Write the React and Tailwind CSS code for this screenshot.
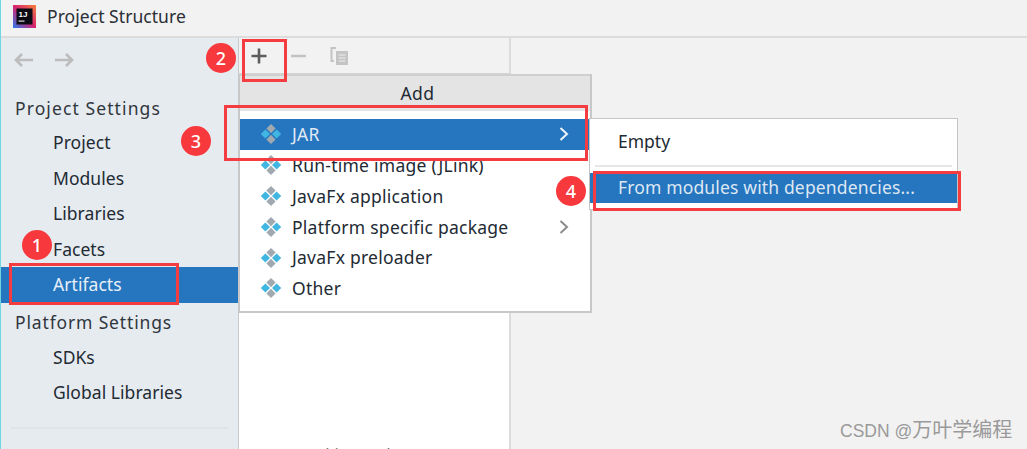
import React from "react";

const FONT = "font-['Noto_Sans','Open_Sans',sans-serif]";

function Diamonds() {
  return (
    <svg width="22" height="22" viewBox="0 0 22 22" className="shrink-0">
      <path d="M11 1l4.6 4.6L11 10.2 6.4 5.6z" fill="#a0a8b0" />
      <path d="M11 11.8l4.6 4.6L11 21l-4.6-4.6z" fill="#a0a8b0" />
      <path d="M5.4 6.4L10 11l-4.6 4.6L.8 11z" fill="#40b6e0" />
      <path d="M16.6 6.4l4.6 4.6-4.6 4.6L12 11z" fill="#40b6e0" />
    </svg>
  );
}

function Chevron({ color }) {
  return (
    <svg width="12" height="16" viewBox="0 0 12 16" className="shrink-0">
      <path d="M2.5 2l6.5 6-6.5 6" fill="none" stroke={color} strokeWidth="2" />
    </svg>
  );
}

function Logo() {
  return (
    <svg width="23" height="23" viewBox="0 0 23 23" className="shrink-0">
      <defs>
        <linearGradient id="ij" x1="0" y1="1" x2="1" y2="0">
          <stop offset="0" stopColor="#2a7bf0" />
          <stop offset="0.5" stopColor="#d6246e" />
          <stop offset="1" stopColor="#f5813a" />
        </linearGradient>
      </defs>
      <rect width="23" height="23" fill="url(#ij)" />
      <rect x="3.5" y="3.5" width="16" height="16" fill="#0b0b14" />
      <text x="5.5" y="12" fontSize="8" fontWeight="700" fill="#fff" fontFamily="Liberation Sans">1J</text>
      <rect x="5.5" y="15.5" width="6" height="1.2" fill="#d8d8d8" />
    </svg>
  );
}

function Badge({ n, className }) {
  return (
    <div className={"absolute w-[30px] h-[30px] rounded-full bg-[#f7383c] text-white text-[18px] font-medium flex items-center justify-center " + className}>
      {n}
    </div>
  );
}

function RedBox({ className }) {
  return <div className={"absolute border-[3px] border-[#f53c40] " + className} />;
}

function NavItem({ label, active }) {
  return (
    <div className={"h-[35.5px] flex items-center pl-[52px] pb-[1px] text-[17.5px] tracking-[0.05px] " + (active ? "bg-[#2675bf] text-[#e8f0f8]" : "text-[#222a33]")}>
      {label}
    </div>
  );
}

function MenuRow({ label, active, more }) {
  return (
    <div className={"h-[30.8px] flex items-center pl-[20px] pr-[20px] gap-[10px] text-[17.5px] tracking-[0.25px] " + (active ? "bg-[#2675bf] text-[#e0eaf5]" : "text-[#222a33]")}>
      <Diamonds />
      <span className="flex-1 whitespace-nowrap">{label}</span>
      {more && <Chevron color={active ? "#eef4fa" : "#8c8c8c"} />}
    </div>
  );
}

export default function App() {
  return (
    <div className={"relative h-[449px] w-[1027px] overflow-hidden bg-[#f2f2f2] border-l border-[#6fd6e4] flex flex-col " + FONT}>
      <div className="h-[38px] shrink-0 flex items-center gap-[11px] pl-[12px] pb-[4px] border-b-2 border-[#dcdcdc] text-[#2b2f36] text-[17.5px] tracking-[0.05px]">
        <Logo />
        <span>Project Structure</span>
      </div>

      <div className="flex flex-1 min-h-0">
        <div className="w-[238px] shrink-0 bg-[#e6ebf0] border-r border-[#c9c9c9]">
          <div className="h-[53px] flex items-start gap-[20px] pl-[12px] pt-[14px]">
            <svg width="21" height="16" viewBox="0 0 21 16">
              <path d="M20 8H3M9 2L3 8l6 6" fill="none" stroke="#bcbcbc" strokeWidth="2.6" />
            </svg>
            <svg width="21" height="16" viewBox="0 0 21 16">
              <path d="M1 8h17M12 2l6 6-6 6" fill="none" stroke="#bcbcbc" strokeWidth="2.6" />
            </svg>
          </div>
          <div className="h-[34px] flex items-center pl-[14px] text-[17.5px] tracking-[1.1px] text-[#30363d]">Project Settings</div>
          <NavItem label="Project" />
          <NavItem label="Modules" />
          <NavItem label="Libraries" />
          <NavItem label="Facets" />
          <NavItem label="Artifacts" active />
          <div className="h-[36px] flex items-center pl-[14px] text-[17.5px] tracking-[0.85px] text-[#30363d] mt-[2px] -mb-[1px]">Platform Settings</div>
          <NavItem label="SDKs" />
          <NavItem label="Global Libraries" />
          <div className="mt-[16px] mx-[10px] h-[2px] bg-[#e0e4e8]" />
        </div>

        <div className="w-[272px] shrink-0 flex flex-col border-r-2 border-[#dcdcdc]">
          <div className="h-[36px] shrink-0 flex items-center pl-[11px] gap-[21px] border-b border-[#d4d4d4]">
            <svg width="18" height="18" viewBox="0 0 18 18">
              <path d="M9 1.5v15M1.5 9h15" fill="none" stroke="#5c5c5c" strokeWidth="2.6" />
            </svg>
            <svg width="18" height="18" viewBox="0 0 18 18">
              <path d="M2 9h15" fill="none" stroke="#c2c2c2" strokeWidth="2.4" />
            </svg>
            <svg width="20" height="20" viewBox="0 0 20 20" className="ml-[2px]">
              <path d="M6 2H1.5v13H4" fill="none" stroke="#c4c4c4" strokeWidth="2" />
              <rect x="6" y="5" width="12" height="14" fill="#c4c4c4" />
              <path d="M8.5 9h7M8.5 12h7M8.5 15h7" stroke="#eeeeee" strokeWidth="1.2" />
            </svg>
          </div>
          <div className="flex-1 bg-white pt-[368px] pr-[32px] text-center text-[15px] text-[#666666] whitespace-nowrap">Nothing to show</div>
        </div>

        <div className="flex-1" />
      </div>

      {/* popup menus sit over the panels */}
      <div className="absolute left-[237px] top-[74px] w-[354px] h-[239px] bg-white border-2 border-[#c8c8c8] border-t-[#cfcfcf]">
        <div className="h-[35px] bg-[#e4e4e4] flex items-center justify-center pl-[5px] text-[17.5px] tracking-[0.4px] text-[#222a33]">Add</div>
        <div className="pt-[8px]">
          <MenuRow label="JAR" active more />
          <MenuRow label="Run-time image (JLink)" />
          <MenuRow label="JavaFx application" />
          <MenuRow label="Platform specific package" more />
          <MenuRow label="JavaFx preloader" />
          <MenuRow label="Other" />
        </div>
      </div>

      <div className="absolute left-[588px] top-[118px] w-[369px] h-[92px] bg-white border border-[#c4c4c4]">
        <div className="h-[46px] flex items-center pl-[28px] pb-[2px] text-[17.5px] text-[#222a33]">Empty</div>
        <div className="mx-[5px] h-[2px] bg-[#e6e6e6]" />
        <div className="mt-[6px] h-[30px] bg-[#2675bf] flex items-center pl-[28px] pb-[2px] text-[17.5px] tracking-[0.15px] text-[#dde8f3] whitespace-nowrap">From modules with dependencies...</div>
      </div>

      {/* annotations */}
      <RedBox className="left-[8px] top-[263px] w-[170px] h-[42px]" />
      <RedBox className="left-[241px] top-[39px] w-[45px] h-[43px]" />
      <RedBox className="left-[223px] top-[105px] w-[364px] h-[56px]" />
      <RedBox className="left-[592px] top-[171px] w-[368px] h-[40px]" />
      <Badge n="1" className="left-[21px] top-[230px]" />
      <Badge n="2" className="left-[205px] top-[43px]" />
      <Badge n="3" className="left-[180px] top-[126px]" />
      <Badge n="4" className="left-[555px] top-[176px]" />

      <div className="absolute left-[839px] top-[419px] leading-[22px] text-[#9a9a9a] whitespace-nowrap font-['Liberation_Sans','Noto_Sans_CJK_SC',sans-serif]">
        <span className="text-[17.5px]">CSDN @</span>
        <span className="text-[20px]">万叶学编程</span>
      </div>
    </div>
  );
}
